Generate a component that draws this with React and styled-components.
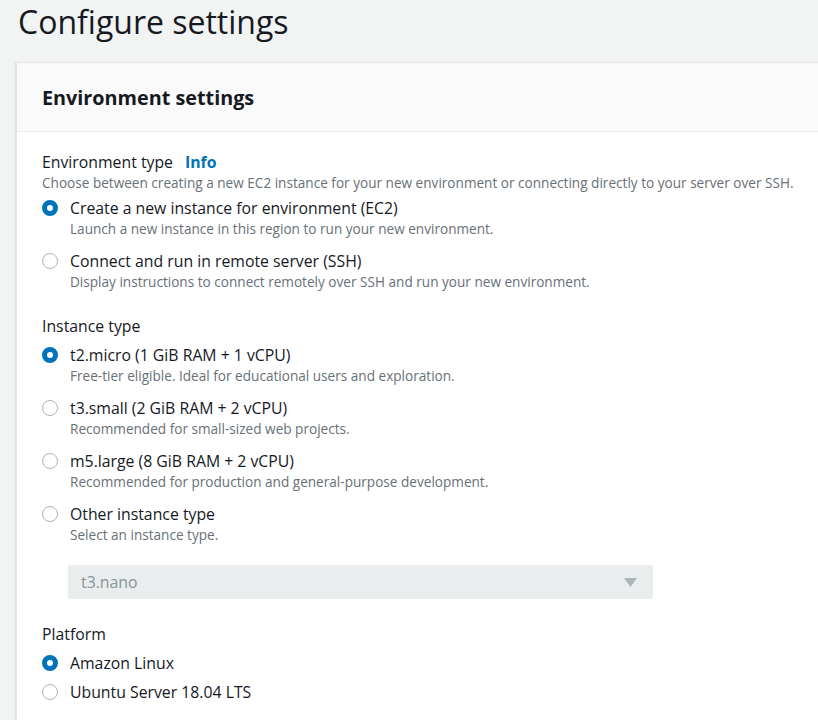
import React from "react";
import styled, { createGlobalStyle } from "styled-components";

const Global = createGlobalStyle`
  html, body { margin: 0; padding: 0; background: #f2f3f3; }
  body { font-family: "Open Sans", "Noto Sans", Arial, sans-serif; color: #16191f; overflow: hidden; }
  * { box-sizing: border-box; }
`;

const Page = styled.div`
  width: 818px;
  height: 720px;
  overflow: hidden;
  background: #f2f3f3;
  display: flex;
  flex-direction: column;
`;

const Title = styled.h1`
  margin: 0;
  padding: 2px 0 0 18px;
  height: 62px;
  flex: none;
  font-size: 32px;
  line-height: 40px;
  font-weight: 400;
  color: #16191f;
`;

const Card = styled.section`
  flex: 1;
  margin-left: 16px;
  width: 820px;
  background: #fff;
  border-left: 1px solid #e1e4e4;
  border-top: 1px solid #e6e8e8;
  box-shadow: -1px 0 1px rgba(0, 22, 40, 0.08);
`;

const CardHeader = styled.header`
  height: 69px;
  padding: 0 25px;
  display: flex;
  align-items: center;
  background: #fafafa;
  border-bottom: 1px solid #eaeded;
`;

const CardTitle = styled.h2`
  margin: 0;
  font-size: 19.8px;
  font-weight: 700;
  color: #16191f;
`;

const CardBody = styled.div`
  padding: 19px 25px 0 25px;
  display: flex;
  flex-direction: column;
`;

const Field = styled.div`
  display: flex;
  flex-direction: column;
  margin-top: ${(p) => p.$top || 0}px;
`;

const Label = styled.div`
  font-size: 15.8px;
  line-height: 22px;
  color: #16191f;
  display: flex;
  gap: 12px;
  white-space: nowrap;
`;

const InfoLink = styled.a`
  color: #0073bb;
  font-weight: 700;
  text-decoration: none;
`;

const Hint = styled.div`
  font-size: 13.6px;
  line-height: 20px;
  color: #687078;
  white-space: nowrap;
`;

const RadioList = styled.div`
  display: flex;
  flex-direction: column;
  gap: ${(p) => p.$gap}px;
  margin-top: ${(p) => p.$top}px;
`;

const RadioRow = styled.label`
  display: flex;
  align-items: flex-start;
  gap: 12px;
`;

const Circle = styled.span`
  flex: none;
  width: 16px;
  height: 16px;
  margin-top: 3px;
  border-radius: 50%;
  border: ${(p) => (p.$checked ? "5px solid #0073bb" : "1.5px solid #aab7b8")};
  background: #fff;
`;

const RadioText = styled.div`
  display: flex;
  flex-direction: column;
`;

const Select = styled.div`
  margin: 20px 0 0 26px;
  width: 585px;
  height: 34px;
  border-radius: 2px;
  background: #eaeded;
  display: flex;
  align-items: center;
  justify-content: space-between;
  padding: 0 16px 0 13px;
  font-size: 15.8px;
  color: #879596;
`;

function Radio({ checked, label, hint }) {
  return (
    <RadioRow>
      <Circle $checked={checked} />
      <RadioText>
        <Label>{label}</Label>
        {hint && <Hint>{hint}</Hint>}
      </RadioText>
    </RadioRow>
  );
}

export default function App() {
  return (
    <Page>
      <Global />
      <Title>Configure settings</Title>
      <Card>
        <CardHeader>
          <CardTitle>Environment settings</CardTitle>
        </CardHeader>
        <CardBody>
          <Field>
            <Label>
              Environment type <InfoLink href="#">Info</InfoLink>
            </Label>
            <Hint>
              Choose between creating a new EC2 instance for your new environment or connecting directly to your server over SSH.
            </Hint>
            <RadioList $gap={11} $top={4}>
              <Radio checked label="Create a new instance for environment (EC2)" hint="Launch a new instance in this region to run your new environment." />
              <Radio label="Connect and run in remote server (SSH)" hint="Display instructions to connect remotely over SSH and run your new environment." />
            </RadioList>
          </Field>
          <Field $top={23}>
            <Label>Instance type</Label>
            <RadioList $gap={11} $top={7}>
              <Radio checked label="t2.micro (1 GiB RAM + 1 vCPU)" hint="Free-tier eligible. Ideal for educational users and exploration." />
              <Radio label="t3.small (2 GiB RAM + 2 vCPU)" hint="Recommended for small-sized web projects." />
              <Radio label="m5.large (8 GiB RAM + 2 vCPU)" hint="Recommended for production and general-purpose development." />
              <Radio label="Other instance type" hint="Select an instance type." />
            </RadioList>
            <Select>
              <span>t3.nano</span>
              <svg width="13" height="9" viewBox="0 0 13 9">
                <path d="M0 0 H13 L6.5 9 Z" fill="#aab7b8" />
              </svg>
            </Select>
          </Field>
          <Field $top={24}>
            <Label>Platform</Label>
            <RadioList $gap={7} $top={7}>
              <Radio checked label="Amazon Linux" />
              <Radio label="Ubuntu Server 18.04 LTS" />
            </RadioList>
          </Field>
        </CardBody>
      </Card>
    </Page>
  );
}
